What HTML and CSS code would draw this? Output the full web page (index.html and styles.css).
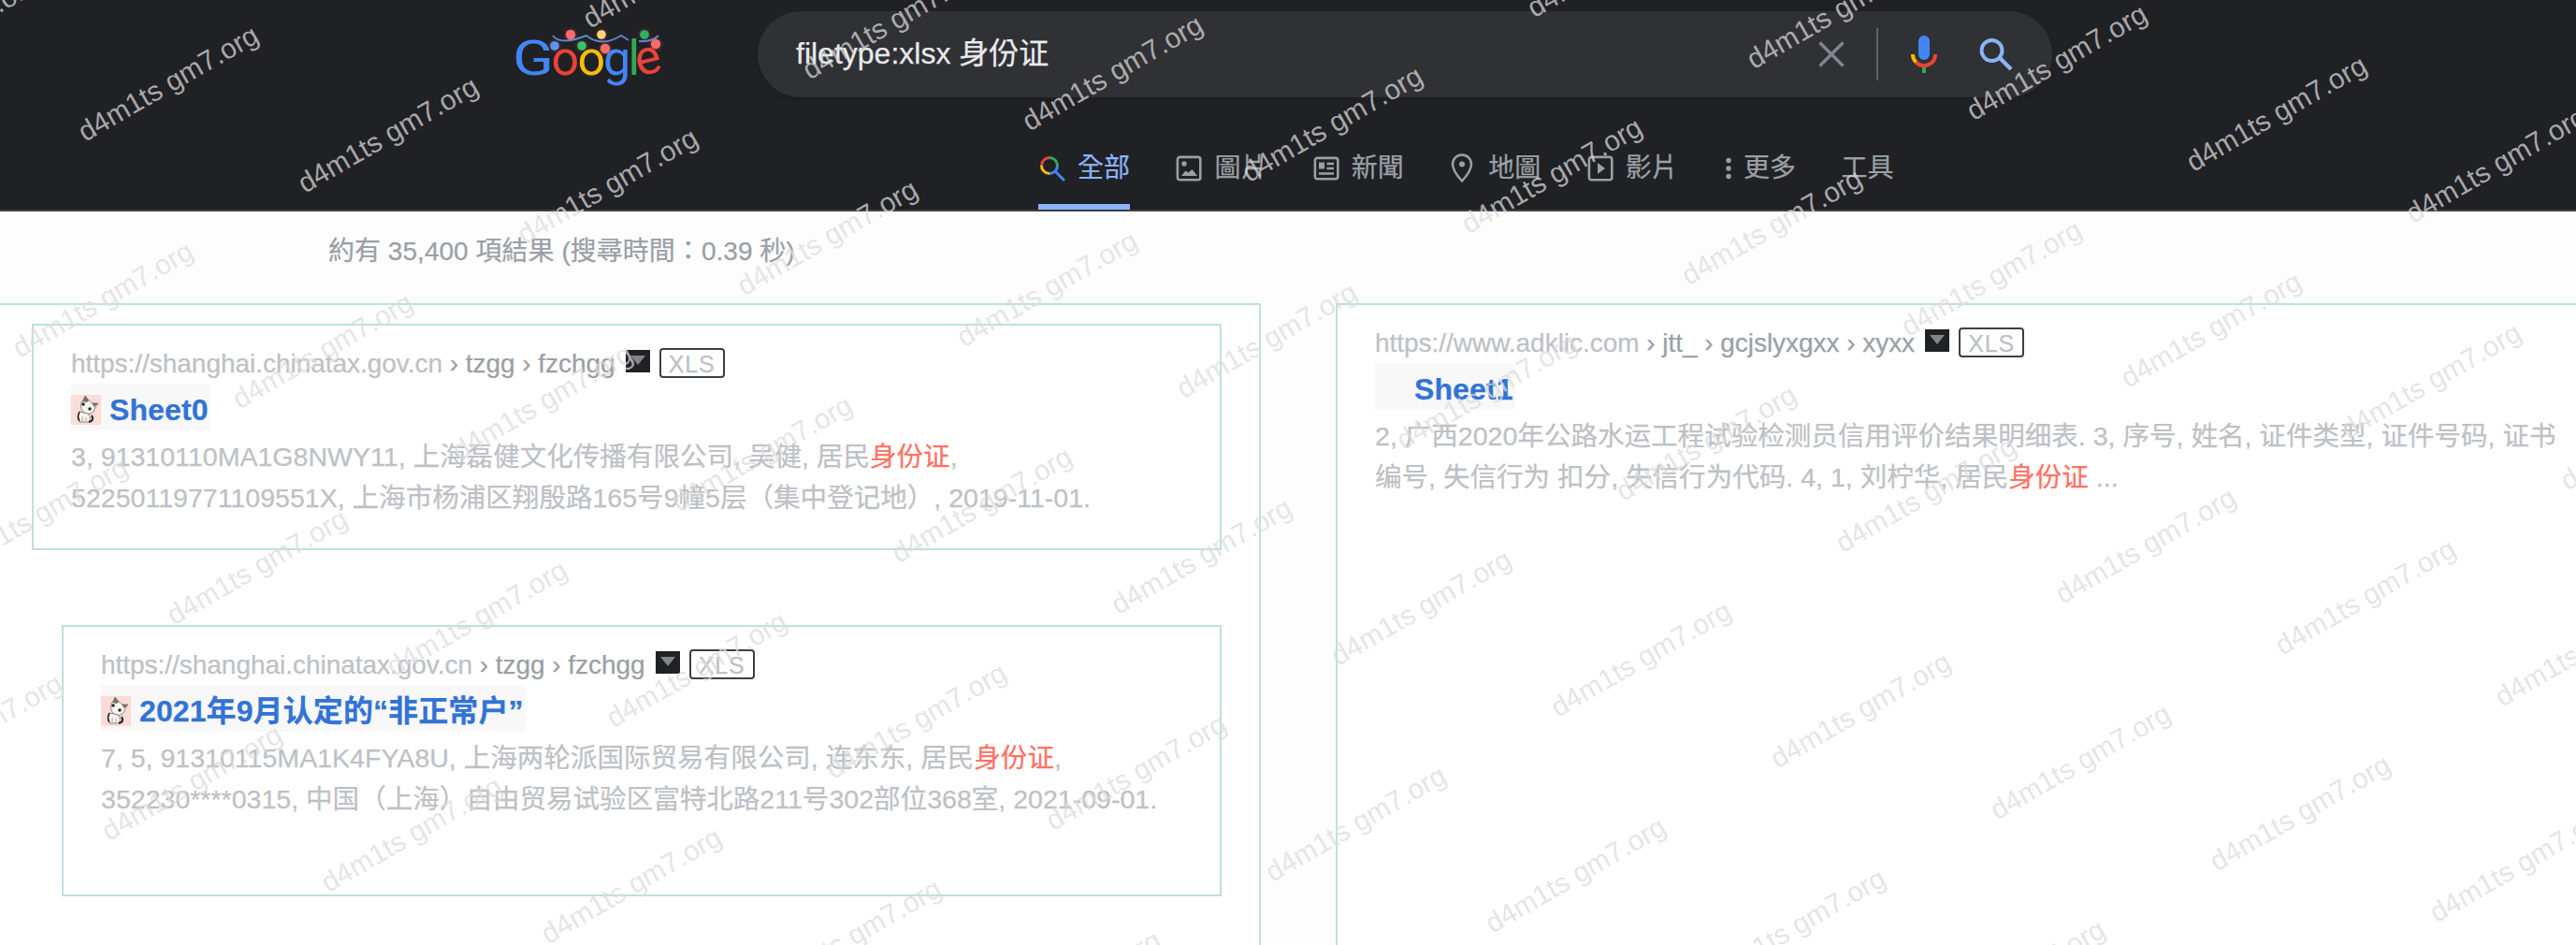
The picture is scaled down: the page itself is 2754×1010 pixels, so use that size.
FILE: index.html
```
<!DOCTYPE html>
<html lang="zh-Hant">
<head>
<meta charset="utf-8">
<title>filetype:xlsx 身份证</title>
<link rel="stylesheet" href="styles.css">
</head>
<body>
<svg class="defs" width="0" height="0">
  <symbol id="cat" viewBox="0 0 32 32">
    <rect width="32" height="32" fill="#fbdcd6"/>
    <path d="M11 8 L14 4 L15 1 L18 5 L23 9 L29 9 L26 13 L24 18 Q20 22 14 19 Q9 15 11 8Z" fill="#f6f3ee" stroke="#77716d" stroke-width=".8"/>
    <path d="M12 7 L15 1 L19 6 L17 8Z M22 9 L29 9 L25 13Z" fill="#77716d"/>
    <path d="M9 18 Q6 24 9 29 L19 29 Q22 24 18 20Z" fill="#f8f5f1" stroke="#77716d" stroke-width=".8"/>
    <path d="M9 18 Q6 24 9 28" fill="none" stroke="#222" stroke-width="1.6"/>
    <path d="M19 29 Q25 28 22 22" fill="none" stroke="#222" stroke-width="2"/>
    <circle cx="13" cy="10" r="1.7" fill="#222"/><circle cx="20" cy="15" r="1.7" fill="#222"/>
    <path d="M12 23v6M16 24v5" stroke="#aaa49f"/>
  </symbol>
</svg>

<header class="header">
  <div class="topbar">
    <svg class="logo" width="160" height="70" viewBox="0 0 160 70" role="img" aria-label="Google">
      <g class="logo-text">
        <text x="-3" y="54" fill="#4285f4" textLength="44" lengthAdjust="spacingAndGlyphs">G</text>
        <text x="38.5" y="54" fill="#ea4335">o</text>
        <text x="66.5" y="54" fill="#fbbc05">o</text>
        <text x="94" y="54" fill="#4285f4">g</text>
        <text x="120.5" y="54" fill="#34a853">l</text>
        <text transform="translate(132 56) rotate(-14)" fill="#ea4335">e</text>
      </g>
      <path d="M40 12 Q48 23 76 12 Q92 25 113 12 L121 17 M132 18 Q146 19 153 12" fill="none" stroke="#5b86cf" stroke-width="2"/>
      <g class="bulbs">
        <circle cx="59" cy="11" r="5.2" fill="#ff6b6b"/><circle cx="42" cy="23" r="4.8" fill="#5b95ee"/>
        <circle cx="71" cy="23" r="4.8" fill="#34c46c"/><circle cx="92" cy="11" r="4.8" fill="#fdd67a"/>
        <circle cx="96" cy="26" r="5.2" fill="#ff6b6b"/><circle cx="138" cy="11" r="4.8" fill="#2bb35c"/>
        <circle cx="150" cy="21" r="5.2" fill="#ff6b6b"/>
      </g>
    </svg>
    <div class="search">
      <span class="query">filetype:xlsx 身份证</span>
      <svg class="clear" width="28" height="28" viewBox="0 0 28 28"><path d="M1.5 1.5L26.5 26.5M26.5 1.5L1.5 26.5" stroke="#80868b" stroke-width="3.4"/></svg>
      <span class="divider"></span>
      <svg class="mic" width="30" height="42" viewBox="0 0 30 42">
        <rect x="9" y="1" width="12" height="26" rx="6" fill="#4285f4"/>
        <path d="M2.9 21 A12.1 12.1 0 0 0 6.5 29.6" fill="none" stroke="#fbbc05" stroke-width="4"/>
        <path d="M6.4 29.5 A12.1 12.1 0 0 0 27.1 21" fill="none" stroke="#ea4335" stroke-width="4"/>
        <rect x="13" y="35" width="4" height="6" fill="#34a853"/>
      </svg>
      <svg class="go" width="36" height="36" viewBox="0 0 36 36"><circle cx="13.5" cy="14" r="11" fill="none" stroke="#8ab4f8" stroke-width="3.9"/><path d="M22 22L34 34" stroke="#8ab4f8" stroke-width="4.4"/></svg>
    </div>
  </div>
  <nav class="nav">
    <a class="tab active"><svg width="28" height="28" viewBox="0 0 28 28" fill="none" stroke-width="3">
      <path d="M2.5 11A8.5 8.5 0 0 1 11 2.5" stroke="#ea4335"/><path d="M11 2.5A8.5 8.5 0 0 1 19.5 11" stroke="#34a853"/>
      <path d="M2.5 11A8.5 8.5 0 0 0 11 19.5" stroke="#fbbc05"/><path d="M19.5 11A8.5 8.5 0 0 1 11 19.5M17 17L27 27" stroke="#4285f4"/></svg>全部</a>
    <a class="tab"><svg width="28" height="28" viewBox="0 0 28 28" fill="none" stroke="currentColor" stroke-width="2.6"><rect x="1.9" y="1.9" width="24.4" height="24.4" rx="2.5"/><circle cx="9" cy="9" r="2.7" fill="currentColor" stroke="none"/><path d="M6 22L10.5 16.5L13.5 18.5L17.5 15L23 22Z" fill="currentColor" stroke="none"/></svg>圖片</a>
    <a class="tab"><svg width="28" height="28" viewBox="0 0 28 28" fill="none" stroke="currentColor" stroke-width="2.6"><rect x="1.9" y="2.9" width="24.4" height="22.4" rx="2.5"/><path d="M6 7.5H12V14.5H6Z" fill="currentColor" stroke="none"/><path d="M14.5 9H22M14.5 14H22M6 19.5H22"/></svg>新聞</a>
    <a class="tab"><svg class="pin" width="28" height="32" viewBox="0 0 28 32" fill="none" stroke="currentColor" stroke-width="2.5"><path d="M13 29.5Q3 18.500 3 11.500A10 10 0 0 1 23 11.500Q23 18.500 13 29.500Z"/><circle cx="13" cy="11.500" r="3" fill="currentColor" stroke="none"/></svg>地圖</a>
    <a class="tab"><svg width="28" height="28" viewBox="0 0 28 28" fill="none" stroke="currentColor" stroke-width="2.6"><rect x="1.9" y="1.9" width="24.4" height="24.4" rx="2.5"/><path d="M11 8L19 14L11 20Z" fill="currentColor" stroke="none"/></svg>影片</a>
    <a class="tab more"><svg width="12" height="24" viewBox="0 0 12 24" fill="currentColor"><circle cx="6" cy="3.500" r="2.700"/><circle cx="6" cy="12" r="2.700"/><circle cx="6" cy="20.500" r="2.700"/></svg>更多</a>
    <a class="tab">工具</a>
  </nav>
</header>

<main>
  <p class="stats">約有 35,400 項結果 (搜尋時間：0.39 秒)</p>
  <div class="columns" lang="zh-CN">
    <section class="panel left">
      <article class="result first">
        <div class="url"><span class="host">https://shanghai.chinatax.gov.cn</span><span class="crumb"> › tzgg › fzchgg</span><span class="caret"></span><span class="badge">XLS</span></div>
        <h3 class="title"><svg width="32" height="32"><use href="#cat"/></svg>Sheet0</h3>
        <p class="snippet">3, 91310110MA1G8NWY11, 上海磊健文化传播有限公司, 吴健, 居民<em>身份证</em>,<br>52250119771109551X, 上海市杨浦区翔殷路165号9幢5层（集中登记地）, 2019-11-01.</p>
      </article>
      <article class="result second">
        <div class="url"><span class="host">https://shanghai.chinatax.gov.cn</span><span class="crumb"> › tzgg › fzchgg</span><span class="caret"></span><span class="badge">XLS</span></div>
        <h3 class="title"><svg width="32" height="32"><use href="#cat"/></svg>2021年9月认定的“非正常户”</h3>
        <p class="snippet">7, 5, 91310115MA1K4FYA8U, 上海两轮派国际贸易有限公司, 连东东, 居民<em>身份证</em>,<br>352230****0315, 中国（上海）自由贸易试验区富特北路211号302部位368室, 2021-09-01.</p>
      </article>
    </section>
    <section class="panel right">
      <div class="url"><span class="host">https://www.adklic.com</span><span class="crumb"> › jtt_ › gcjslyxgxx › xyxx</span><span class="caret"></span><span class="badge">XLS</span></div>
      <h3 class="title"><span class="blank"></span>Sheet1</h3>
      <p class="snippet">2, 广西2020年公路水运工程试验检测员信用评价结果明细表. 3, 序号, 姓名, 证件类型, 证件号码, 证书<br>编号, 失信行为 扣分, 失信行为代码. 4, 1, 刘柠华, 居民<em>身份证</em> ...</p>
    </section>
  </div>
</main>
<svg class="watermark" width="2754" height="1010" aria-hidden="true"></svg>
<script src="script.js"></script>
</body>
</html>
```
FILE: styles.css
```
* { box-sizing: border-box; }
body {
  margin: 0;
  position: relative;
  height: 1010px;
  overflow: hidden;
  display: flex;
  flex-direction: column;
  background: #fdfdfd;
  font-family: "Liberation Sans", "Noto Sans CJK SC", sans-serif;
  font-size: 28px;
  -webkit-text-stroke: .25px currentColor;
}
.defs { position: absolute; }
.header {
  flex: none;
  height: 226px;
  background: #202124;
  border-bottom: 2px solid #3c4043;
  display: flex;
  flex-direction: column;
  justify-content: space-between;
}
.topbar { display: flex; align-items: flex-start; padding: 12px 0 0 551px; }
.logo { margin: 14px 99px 0 0; overflow: visible; }
.logo-text { font-family: Roboto, sans-serif; font-size: 52px; font-weight: 400; -webkit-text-stroke: 0; }
.logo-text text { paint-order: stroke; }
.bulbs { filter: drop-shadow(0 0 2px rgba(255, 120, 120, .4)); }
.search {
  width: 1384px;
  height: 92px;
  border-radius: 46px;
  background: #303134;
  box-shadow: 0 2px 4px rgba(0, 0, 0, .15);
  display: flex;
  align-items: center;
  padding: 0 42px 0 41px;
}
.query { flex: 1; font-size: 32px; line-height: 40px; color: #e8eaed; padding-bottom: 2px; }
.divider { width: 2px; height: 56px; margin: 0 34px; background: #5f6368; }
.mic { margin-right: 44px; }
.nav {
  display: flex;
  gap: 48.4px;
  padding-left: 1110px;
  font-family: "Liberation Sans", "Noto Sans CJK TC", sans-serif;
  color: #9aa0a6;
}
.tab { display: flex; align-items: center; height: 88px; line-height: 40px; border-bottom: 6px solid transparent; padding-top: 6px; }
.tab svg { flex: none; margin: 0 13px 0 1px; }
.tab.more svg { margin: 0 10px 0 0; }
.tab.active { color: #8ab4f8; border-color: #8ab4f8; }
main { flex: 1; display: flex; flex-direction: column; }
.stats {
  margin: 0;
  height: 98px;
  padding: 23px 0 0 351px;
  line-height: 40px;
  letter-spacing: .03px;
  color: #9aa0a6;
  font-family: "Liberation Sans", "Noto Sans CJK TC", sans-serif;
}
.columns { flex: 1; display: flex; gap: 80px; }
.panel { background: #fff; border: 2px solid #bce1de; border-bottom: 0; }
.left { width: 1348px; border-left: 0; padding: 20px 40px 0 34px; display: flex; flex-direction: column; gap: 80px; }
.right { flex: 1; border-right: 0; padding: 24px 0 0 40px; }
.result { border: 2px solid #bce1de; padding: 24px 0 0 40px; }
.first { height: 242px; }
.second { height: 290px; margin-left: 32px; }
.url { display: flex; align-items: flex-start; height: 32px; line-height: 34px; white-space: pre; }
.host { color: #bdc1c6; letter-spacing: -.03px; }
.crumb { color: #9aa0a6; letter-spacing: -.04px; }
.caret { width: 26px; height: 24px; margin: 2px 10px 0 11px; background: #202124; }
.caret::after { content: ""; display: block; width: 0; margin: 6px auto 0; border: 8px solid transparent; border-top: 10px solid #80868b; border-bottom: 0; }
.badge { width: 70px; height: 32px; border: 2px solid #3c4043; border-radius: 4px; color: #bdc1c6; font-size: 25px; line-height: 30px; letter-spacing: .8px; text-align: center; }
.title { display: flex; align-items: center; width: max-content; height: 50px; margin: 6px 0; padding: 6px 2px 0 0; background: #f8f8f8; color: #3273d6; font-size: 32px; font-weight: 700; line-height: 44px; letter-spacing: .1px; }
.title svg { margin-right: 9px; }
.blank { width: 42px; }
.snippet { margin: 0; color: #bdc1c6; font-size: 28.56px; line-height: 44px; white-space: nowrap; }
.snippet em { color: #ff7262; font-style: normal; }
.watermark { position: absolute; left: 0; top: 0; pointer-events: none; font-size: 30px; fill: rgba(220, 220, 220, .74); -webkit-text-stroke: .4px rgba(220, 220, 220, .6); }
```
FILE: script.js
```
// Staggered diagonal watermark over the whole page.
const layer = document.querySelector('.watermark');
for (let row = -2; row < 9; row++) {
  for (let col = -2; col < 16; col++) {
    const x = 91 + col * 234.9 - row * 69.9;
    const y = 152 + col * 54.9 + row * 230.9;
    if (x < -200 || x > 2780 || y < -20 || y > 1140) continue;
    const t = document.createElementNS('http://www.w3.org/2000/svg', 'text');
    t.setAttribute('transform', `translate(${x.toFixed(1)} ${y.toFixed(1)}) rotate(-30)`);
    t.textContent = 'd4m1ts gm7.org';
    layer.appendChild(t);
  }
}
```
